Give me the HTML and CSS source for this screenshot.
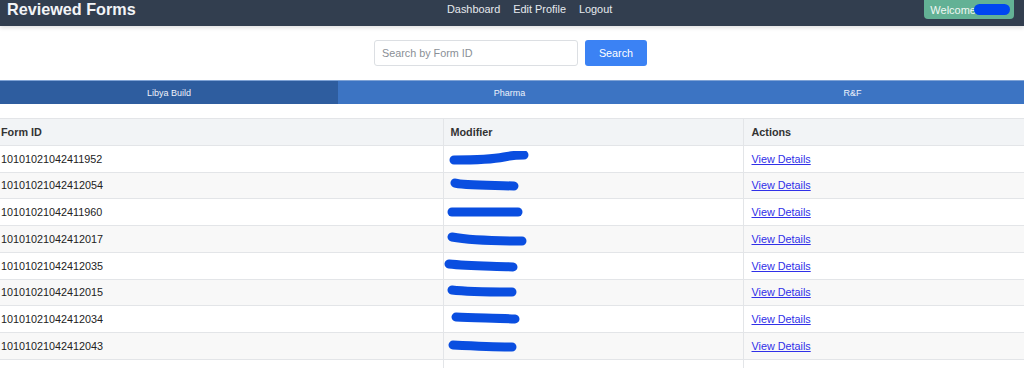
FILE: index.html
```html
<!DOCTYPE html>
<html lang="en">
<head>
    <meta charset="UTF-8">
    <meta name="viewport" content="width=device-width, initial-scale=1.0">
    <title>Reviewed Forms</title>
    <link rel="stylesheet" href="styles.css">
</head>
<body>

    <!-- Barra do topo -->
    <header class="topbar">
        <h1 class="title">Reviewed Forms</h1>
        <nav class="links">
            <a href="#">Dashboard</a>
            <a href="#">Edit Profile</a>
            <a href="#">Logout</a>
        </nav>
        <div class="welcome">Welcome<span class="blob"></span></div>
    </header>

    <!-- Busca -->
    <div class="search">
        <input type="text" placeholder="Search by Form ID">
        <button type="button">Search</button>
    </div>

    <!-- Abas -->
    <div class="tabs">
        <div class="tab active">Libya Build</div>
        <div class="tab">Pharma</div>
        <div class="tab">R&amp;F</div>
    </div>

    <table class="forms">
        <colgroup>
            <col class="col-id">
            <col class="col-mod">
            <col>
        </colgroup>
        <thead>
            <tr><th>Form ID</th><th>Modifier</th><th>Actions</th></tr>
        </thead>
        <tbody>
            <tr>
                <td>10101021042411952</td>
                <td><svg class="mark" width="90" height="16" viewBox="0 0 90 16"><path d="M10 9 C30 9 50 8 60 6 S76 4 80 4" /></svg></td>
                <td><a href="#">View Details</a></td>
            </tr>
            <tr>
                <td>10101021042412054</td>
                <td><svg class="mark" width="90" height="16" viewBox="0 0 90 16"><path d="M11 6 C16 8 34 8 70 9" /></svg></td>
                <td><a href="#">View Details</a></td>
            </tr>
            <tr>
                <td>10101021042411960</td>
                <td><svg class="mark" width="90" height="16" viewBox="0 0 90 16"><path d="M8 8 L74 8" /></svg></td>
                <td><a href="#">View Details</a></td>
            </tr>
            <tr>
                <td>10101021042412017</td>
                <td><svg class="mark" width="90" height="16" viewBox="0 0 90 16"><path d="M8 6 C24 9 50 10 78 10" /></svg></td>
                <td><a href="#">View Details</a></td>
            </tr>
            <tr>
                <td>10101021042412035</td>
                <td><svg class="mark" width="90" height="16" viewBox="0 0 90 16"><path d="M5 6 C24 8 49 8 69 9" /></svg></td>
                <td><a href="#">View Details</a></td>
            </tr>
            <tr>
                <td>10101021042412015</td>
                <td><svg class="mark" width="90" height="16" viewBox="0 0 90 16"><path d="M8 6 C24 8 49 8 68 8" /></svg></td>
                <td><a href="#">View Details</a></td>
            </tr>
            <tr>
                <td>10101021042412034</td>
                <td><svg class="mark" width="90" height="16" viewBox="0 0 90 16"><path d="M12 6 C29 7 54 7 71 8" /></svg></td>
                <td><a href="#">View Details</a></td>
            </tr>
            <tr>
                <td>10101021042412043</td>
                <td><svg class="mark" width="90" height="16" viewBox="0 0 90 16"><path d="M9 7 C29 8 54 9 68 9" /></svg></td>
                <td><a href="#">View Details</a></td>
            </tr>
            <tr>
                <td>10101021042412007</td>
                <td class="plain">ibrahim.taher</td>
                <td><a href="#">View Details</a></td>
            </tr>
        </tbody>
    </table>

</body>
</html>
```

FILE: styles.css
```css
body {
    font-family: 'Liberation Sans', Arial, sans-serif;
    margin: 0;
    background: white;
    color: #222;
}

.topbar {
    display: flex;
    align-items: flex-start;
    height: 26px;
    background: #323e4f;
    box-shadow: 0 2px 4px rgba(0,0,0,0.12);
    padding: 0 10px 0 7px;
}

.title {
    margin: 0;
    width: 440px;
    font-size: 16.2px;
    line-height: 18px;
    color: #f2f4f7;
}

.links {
    display: flex;
    gap: 13px;
    padding-top: 3px;
}

.links a {
    color: #e6e9ee;
    text-decoration: none;
    font-size: 10.9px;
}

.welcome {
    display: flex;
    align-items: center;
    background: #63b195;
    color: #f0f7f3;
    font-size: 11px;
    height: 19px;
    padding: 0 4px 0 6px;
    border-radius: 0 0 4px 4px;
    margin-left: auto;
}

.blob {
    display: inline-block;
    width: 36px;
    height: 11px;
    background: #0046f0;
    border-radius: 6px;
    margin-left: -2px;
}

.search {
    display: flex;
    justify-content: center;
    gap: 7px;
    margin: 14px 0 14px;
    padding-right: 3px;
}

.search input {
    width: 204px;
    height: 26px;
    box-sizing: border-box;
    padding: 0 7px;
    border: 1px solid #dcdfe3;
    border-radius: 3px;
    font-family: inherit;
    font-size: 10.8px;
}

.search input::placeholder {
    color: #8a8f96;
}

.search button {
    width: 62px;
    height: 26px;
    background: #3b82f4;
    color: white;
    border: none;
    border-radius: 3px;
    font-family: inherit;
    font-size: 10.8px;
}

.tabs {
    display: flex;
    height: 24px;
    border-top: 1px solid #7fa3d6;
    box-sizing: border-box;
}

.tab {
    flex: 1;
    display: flex;
    align-items: center;
    justify-content: center;
    background: #3c74c3;
    color: #eef3fb;
    font-size: 9px;
}

.tab.active {
    flex: 0 0 338px;
    background: #2e5d9f;
}

.forms {
    width: 100%;
    table-layout: fixed;
    border-collapse: collapse;
    margin-top: 14px;
    font-size: 10.8px;
}

.col-id {
    width: 443px;
}

.col-mod {
    width: 300px;
}

.forms th,
.forms td {
    height: 25.75px;
    padding: 0 8px;
    text-align: left;
    border-top: 1px solid #e3e5e8;
    border-left: 1px solid #e3e5e8;
}

.forms th:first-child,
.forms td:first-child {
    border-left: none;
    padding-left: 1px;
}

.forms th:nth-child(2) {
    padding-left: 7px;
}

.forms th {
    background: #f2f4f6;
    color: #333;
    font-weight: bold;
}

.forms tbody tr:nth-child(even) {
    background: #f8f8f8;
}

.forms td:nth-child(2) {
    padding: 0;
    line-height: 0;
}

.forms td.plain {
    line-height: normal;
    padding-left: 8px;
    color: #555;
}

.mark path {
    fill: none;
    stroke: #0a4ee0;
    stroke-width: 9;
    stroke-linecap: round;
}

.forms a {
    color: #3030e8;
}
```
